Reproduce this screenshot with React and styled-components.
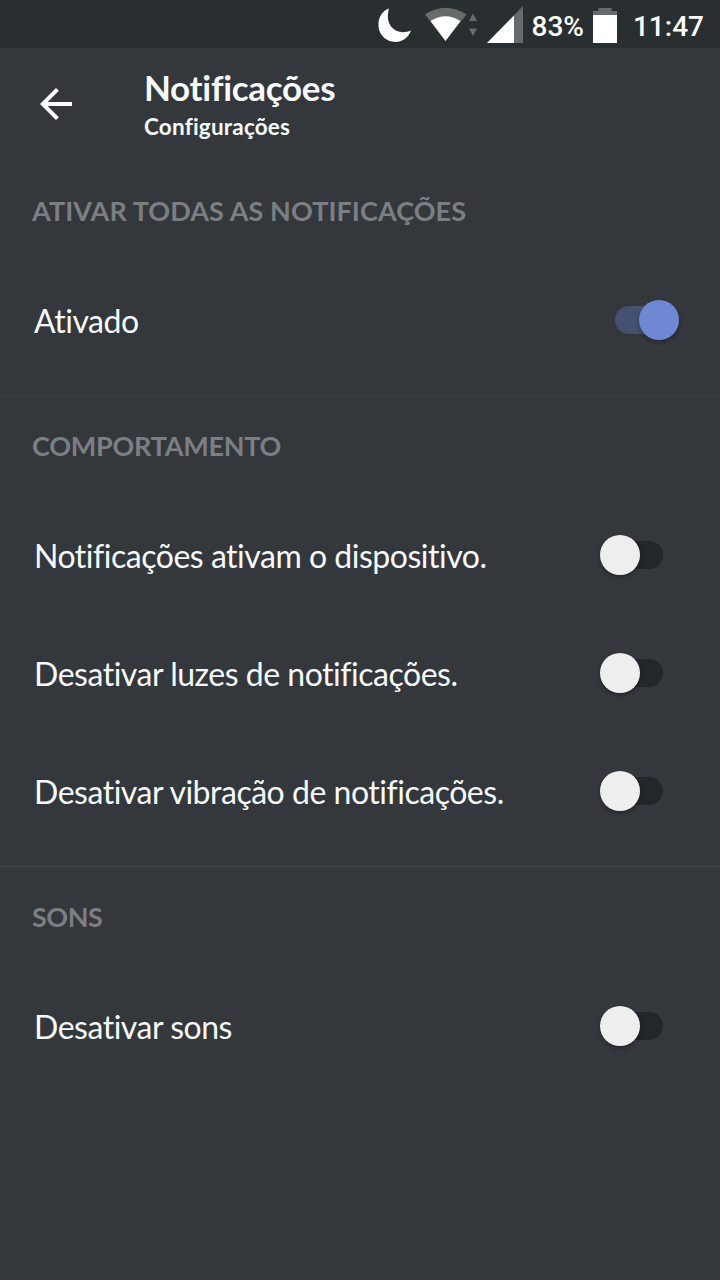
import React from 'react';
import styled, { createGlobalStyle } from 'styled-components';

const GlobalStyle = createGlobalStyle`
  * { box-sizing: border-box; }
  body { margin: 0; background: #34373c; }
`;

const Screen = styled.div`
  width: 720px;
  height: 1280px;
  overflow: hidden;
  display: flex;
  flex-direction: column;
  background: #34373c;
  color: #f6fafa;
  font-family: Lato, 'Noto Sans', sans-serif;
  font-variant-ligatures: none;
`;

const StatusBar = styled.div`
  height: 48px;
  flex: none;
  display: flex;
  align-items: center;
  justify-content: flex-end;
  padding-right: 16px;
  background: #292e30;
  color: #fff;
  font: 500 28px/48px Roboto, sans-serif;
`;

const StatusIcons = styled.svg`
  width: 150px;
  height: 48px;
  flex: none;
  margin-right: 7px;
`;

const StatusText = styled.span`
  padding-top: 5px;
`;

const Battery = styled.svg`
  width: 24px;
  height: 48px;
  margin: 0 16px 0 9px;
`;

const AppBar = styled.header`
  height: 113px;
  flex: none;
  display: flex;
  align-items: center;
  padding: 0 0 1px 32px;
  gap: 64px;
`;

const BackIcon = styled.svg`
  width: 48px;
  height: 48px;
  flex: none;
`;

const Titles = styled.div`
  display: flex;
  flex-direction: column;
  padding-top: 2px;
`;

const Title = styled.h1`
  margin: 0;
  font-size: 35px;
  font-weight: 700;
  line-height: 43px;
  letter-spacing: -0.3px;
  white-space: nowrap;
`;

const Subtitle = styled.div`
  font-size: 22.5px;
  font-weight: 700;
  line-height: 36px;
  letter-spacing: 0.2px;
  white-space: nowrap;
`;

const Section = styled.section`
  padding-bottom: 16px;
  border-bottom: 1px solid ${(p) => p.$divider};
`;

const SectionTitle = styled.h2`
  margin: 0;
  height: 100px;
  padding-left: 32px;
  font-size: 27px;
  font-weight: 700;
  line-height: 100px;
  letter-spacing: ${(p) => p.$tracking}px;
  color: #7b7f84;
  white-space: nowrap;
`;

const Row = styled.div`
  height: 118px;
  display: flex;
  align-items: center;
  justify-content: space-between;
  padding: 0 57px 0 34px;
`;

const Label = styled.span`
  padding-top: 1px;
  font-size: 32px;
  line-height: 44px;
  letter-spacing: -0.48px;
  white-space: nowrap;
`;

const Track = styled.span`
  position: relative;
  width: 48px;
  height: 28px;
  border-radius: 14px;
  background: ${(p) => (p.$on ? '#465171' : '#222829')};
`;

const Thumb = styled.span`
  position: absolute;
  top: -6px;
  left: ${(p) => (p.$on ? 24 : -15.5)}px;
  width: 40px;
  height: 40px;
  border-radius: 50%;
  background: ${(p) => (p.$on ? '#7088d4' : '#eee')};
  box-shadow: 0 2px 4px rgba(0, 0, 0, 0.3);
`;

const sections = [
  {
    title: 'ATIVAR TODAS AS NOTIFICAÇÕES',
    tracking: 0.08,
    divider: '#3a4145',
    rows: [{ label: 'Ativado', on: true }],
  },
  {
    title: 'COMPORTAMENTO',
    tracking: -0.25,
    divider: '#42484c',
    rows: [
      { label: 'Notificações ativam o dispositivo.' },
      { label: 'Desativar luzes de notificações.' },
      { label: 'Desativar vibração de notificações.' },
    ],
  },
  {
    title: 'SONS',
    tracking: -0.5,
    divider: 'transparent',
    rows: [{ label: 'Desativar sons' }],
  },
];

export default function App() {
  return (
    <Screen>
      <GlobalStyle />
      <StatusBar>
        <StatusIcons viewBox="375 0 150 48">
          <path d="M389 8.5C382 11 378.500 17.500 378.500 24A16.700 16.700 0 0 0 411 30.500C404 33.500 396 32.500 391.500 27C387.500 22 387 15 389 8.500Z" fill="#fff" />
          <path d="M425 14.500Q445.500 1 466.500 14.500L445.500 41Z" fill="#676b6c" />
          <path d="M430.500 21Q445.500 11.500 460.500 21L445.500 41Z" fill="#fff" />
          <path d="M469 21L473 13.500L477 21ZM469 28.500H477L473 36Z" fill="#676b6c" />
          <path d="M487 43L523 6V43Z" fill="#676b6c" />
          <path d="M487 43L514 15.500V43Z" fill="#fff" />
        </StatusIcons>
        <StatusText>83%</StatusText>
        <Battery viewBox="0 0 24 48">
          <path d="M5.500 8H18.500V11H24V16H0V11H5.500Z" fill="#676b6c" />
          <path d="M0 15H24V43H0Z" fill="#fff" />
        </Battery>
        <StatusText>11:47</StatusText>
      </StatusBar>
      <AppBar>
        <BackIcon viewBox="0 0 24 24">
          <path d="M20 11H7.830l5.590-5.590L12 4l-8 8 8 8 1.410-1.410L7.830 13H20v-2z" fill="#fff" />
        </BackIcon>
        <Titles>
          <Title>Notificações</Title>
          <Subtitle>Configurações</Subtitle>
        </Titles>
      </AppBar>
      {sections.map((s) => (
        <Section key={s.title} $divider={s.divider}>
          <SectionTitle $tracking={s.tracking}>{s.title}</SectionTitle>
          {s.rows.map((r) => (
            <Row key={r.label}>
              <Label>{r.label}</Label>
              <Track $on={r.on}>
                <Thumb $on={r.on} />
              </Track>
            </Row>
          ))}
        </Section>
      ))}
    </Screen>
  );
}
